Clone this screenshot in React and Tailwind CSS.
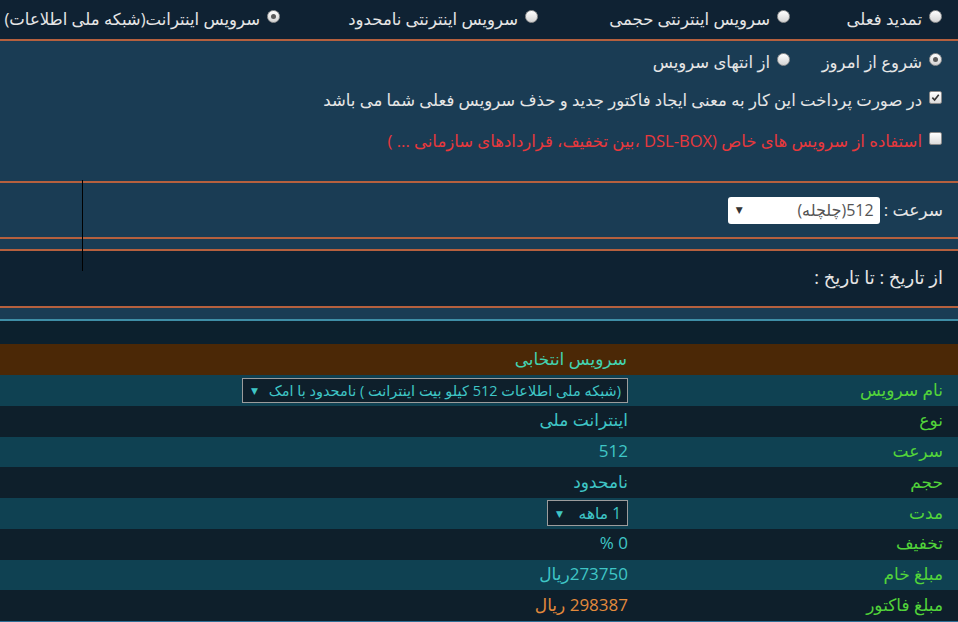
import React from "react";

const FONT = { fontFamily: '"Open Sans", "DejaVu Sans", sans-serif' };

function Radio({ checked }) {
  return (
    <span className="relative inline-flex w-[13px] h-[13px] shrink-0 rounded-full bg-gradient-to-b from-[#ffffff] to-[#d4d4d4] border border-[#9a9a9a] items-center justify-center">
      {checked && <span className="w-[5px] h-[5px] rounded-full bg-[#5a5a5a]" />}
    </span>
  );
}

function Check({ checked }) {
  return (
    <span className="inline-flex w-[13px] h-[13px] shrink-0 rounded-[2px] bg-gradient-to-b from-[#ffffff] to-[#dcdcdc] border border-[#8a8a8a] items-center justify-center">
      {checked && (
        <svg width="9" height="9" viewBox="0 0 10 10">
          <path d="M1.5 5.2 L4 7.8 L8.6 2" fill="none" stroke="#333" strokeWidth="1.8" />
        </svg>
      )}
    </span>
  );
}

function OrangeLine() {
  return <div className="h-[2px] bg-[#b5603e]" />;
}

const rows = [
  { label: "نام سرویس", kind: "select" },
  { label: "نوع", value: "اینترانت ملی" },
  { label: "سرعت", value: "512" },
  { label: "حجم", value: "نامحدود" },
  { label: "مدت", kind: "duration" },
  { label: "تخفیف", value: "0 %" },
  { label: "مبلغ خام", value: "273750ریال" },
  { label: "مبلغ فاکتور", value: "298387 ریال", orange: true },
];

export default function App() {
  return (
    <div
      dir="rtl"
      style={FONT}
      className="relative w-[958px] h-[622px] overflow-hidden bg-[#1a3c54] text-[16.5px] text-[#e6e6e6]"
    >
      {/* top bar */}
      <div className="h-[39px] bg-[#0f2233] flex items-center pr-[16px] text-[16.5px]">
        <div className="w-[152px] flex items-center gap-[7px]">
          <span className="-mt-[7px] flex"><Radio /></span>
          <span>تمدید فعلی</span>
        </div>
        <div className="w-[252px] flex items-center gap-[7px]">
          <span className="-mt-[7px] flex"><Radio /></span>
          <span>سرویس اینترنتی حجمی</span>
        </div>
        <div className="w-[258px] flex items-center gap-[7px]">
          <span className="-mt-[7px] flex"><Radio /></span>
          <span>سرویس اینترنتی نامحدود</span>
        </div>
        <div className="flex-1 flex items-center gap-[7px] whitespace-nowrap">
          <span className="-mt-[7px] flex"><Radio checked /></span>
          <span>سرویس اینترانت(شبکه ملی اطلاعات)</span>
        </div>
      </div>
      <OrangeLine />

      {/* options */}
      <div className="h-[140px] flex flex-col pr-[16px]">
        <div className="h-[24px] mt-[9px] flex items-center">
          <div className="w-[152px] flex items-center gap-[7px]">
            <span className="-mt-[6px] flex"><Radio checked /></span>
            <span>شروع از امروز</span>
          </div>
          <div className="flex items-center gap-[7px]">
            <span className="-mt-[6px] flex"><Radio /></span>
            <span>از انتهای سرویس</span>
          </div>
        </div>
        <div className="h-[24px] mt-[14px] flex items-center gap-[7px]">
          <span className="-mt-[5px] flex"><Check checked /></span>
          <span>در صورت پرداخت این کار به معنی ایجاد فاکتور جدید و حذف سرویس فعلی شما می باشد</span>
        </div>
        <div className="h-[24px] mt-[17px] flex items-center gap-[7px]">
          <span className="-mt-[5px] flex"><Check /></span>
          <span className="text-[#e8383c]">استفاده از سرویس های خاص (DSL-BOX ،بین تخفیف، قراردادهای سازمانی ... )</span>
        </div>
      </div>
      <OrangeLine />

      {/* speed */}
      <div className="h-[54px] flex items-center pr-[15px] gap-[4px]">
        <span className="text-[17px]">سرعت :</span>
        <div className="w-[152px] h-[27px] bg-white rounded-[3px] flex items-center justify-between pr-[6px] pl-[8px]">
          <span className="text-[#555] text-[16px]">512(چلچله)</span>
          <span className="text-[#333] text-[9px]">▼</span>
        </div>
      </div>
      <OrangeLine />
      <div className="h-[10px]" />
      <OrangeLine />

      {/* dates */}
      <div className="h-[55px] bg-[#0e2232] flex items-center pr-[15px] pb-[3px]">
        <span className="text-[18px]">از تاریخ : تا تاریخ :</span>
      </div>
      <OrangeLine />
      <div className="h-[11px]" />
      <div className="h-[2px] bg-[#3f8ea6]" />
      <div className="h-[23px] bg-[#0c202d]" />

      {/* header */}
      <div className="h-[31px] bg-[#4b2806] grid grid-cols-[328px_1fr] items-center">
        <div />
        <div className="pr-[3px] text-[#43d3b0] text-[17px] -mt-[2px]">سرویس انتخابی</div>
      </div>

      {/* rows */}
      {rows.map((r, i) => (
        <div
          key={i}
          className={
            "h-[30.75px] grid grid-cols-[328px_1fr] items-center text-[17px] " +
            (i % 2 === 0 ? "bg-[#0f4152]" : "bg-[#0e1f2b]")
          }
        >
          <div className="pr-[15px] text-[#52d43a] -mt-[2px]">{r.label}</div>
          <div className="pr-[2px]">
            {r.kind === "select" ? (
              <div className="w-[386px] h-[25px] border border-[#9c9c9c] bg-[#0e1f2b] flex items-center pr-[6px] pl-[8px] gap-[8px] text-[#3fc6c6] text-[14.5px]">
                <span className="flex-1 min-w-0 overflow-hidden whitespace-nowrap">(شبکه ملی اطلاعات 512 کیلو بیت اینترانت ) نامحدود با امک</span>
                <span className="text-[9px] shrink-0">▼</span>
              </div>
            ) : r.kind === "duration" ? (
              <div className="w-[81px] h-[26px] border border-[#9c9c9c] bg-[#0e1f2b] flex items-center pr-[6px] pl-[8px] justify-between text-[#3fc6c6] text-[15.5px]">
                <span>1 ماهه</span>
                <span className="text-[9px]">▼</span>
              </div>
            ) : (
              <span className={"block -mt-[2px] " + (r.orange ? "text-[#e38a3c]" : "text-[#3fc6c6]")}>{r.value}</span>
            )}
          </div>
        </div>
      ))}
      <div className="h-[2px] bg-[#2f6f96]" />

      {/* stray vertical line */}
      <div className="absolute left-[82px] top-[180px] w-[1px] h-[91px] bg-black" />
    </div>
  );
}
